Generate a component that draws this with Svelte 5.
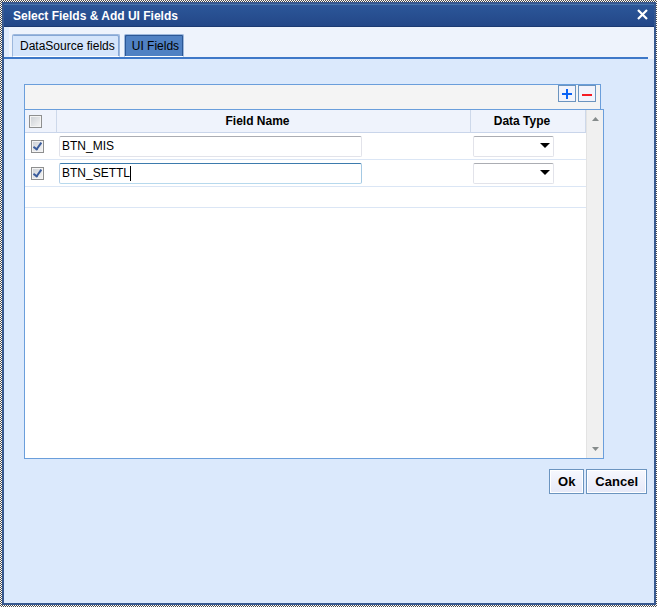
<script lang="ts">
	interface Field {
		id: number;
		name: string;
		type: string;
		checked: boolean;
	}

	const tabs = ['DataSource fields', 'UI Fields'];
	const types = ['', 'String', 'Number', 'Date'];

	let activeTab = $state(1);
	let editing = $state(2);
	let allChecked = $state(false);
	let nextId = 3;
	let fields = $state<Field[]>([
		{ id: 1, name: 'BTN_MIS', type: '', checked: true },
		{ id: 2, name: 'BTN_SETTL', type: '', checked: true }
	]);

	function addField() {
		fields.push({ id: nextId++, name: '', type: '', checked: false });
	}

	function removeFields() {
		fields = fields.filter((f) => !f.checked);
	}

	function toggleAll() {
		for (const f of fields) f.checked = allChecked;
	}
</script>

<div class="frame">
	<div class="dialog" role="dialog" aria-labelledby="dialog-title">
		<header class="title-bar">
			<h1 id="dialog-title">Select Fields &amp; Add UI Fields</h1>
			<button class="close" aria-label="Close">
				<svg width="11" height="11" viewBox="0 0 11 11">
					<path d="M1 1l9 9M10 1l-9 9" stroke="#fff" stroke-width="2.2" fill="none" />
				</svg>
			</button>
		</header>

		<div class="tab-strip">
			<div class="tabs" role="tablist">
				{#each tabs as tab, i}
					<button
						class="tab"
						class:active={activeTab === i}
						role="tab"
						aria-selected={activeTab === i}
						onclick={() => (activeTab = i)}>{tab}</button>
				{/each}
			</div>
		</div>

		<main>
			<div class="toolbar">
				<button class="tool" aria-label="Add field" onclick={addField}>
					<svg width="12" height="13" viewBox="0 0 12 13">
						<path d="M1 6h10v2H1zM5 2h2v10H5z" fill="#0a62f5" />
					</svg>
				</button>
				<button class="tool" aria-label="Remove field" onclick={removeFields}>
					<svg width="12" height="13" viewBox="0 0 12 13">
						<path d="M1 7h10v2H1z" fill="#f51b24" />
					</svg>
				</button>
			</div>

			<div class="grid">
				<div class="rows">
					<table>
						<thead>
							<tr>
								<th class="check">
									<input type="checkbox" aria-label="Select all" bind:checked={allChecked} onchange={toggleAll} />
								</th>
								<th>Field Name</th>
								<th class="type">Data Type</th>
							</tr>
						</thead>
						<tbody>
							{#each fields as field (field.id)}
								<tr>
									<td class="check">
										<input type="checkbox" aria-label="Select {field.name}" bind:checked={field.checked} />
									</td>
									<td>
										<div class="name" class:editing={editing === field.id}>
											<input
												type="text"
												aria-label="Field Name"
												bind:value={field.name}
												onfocus={() => (editing = 0)}
											/>
											{#if editing === field.id}
												<span class="caret"></span>
											{/if}
										</div>
									</td>
									<td class="type">
										<select aria-label="Data Type" bind:value={field.type}>
											{#each types as type}
												<option value={type}>{type}</option>
											{/each}
										</select>
										<svg class="arrow" width="10" height="5" viewBox="0 0 10 5">
											<path d="M0 0h10L5 5z" fill="#000" />
										</svg>
									</td>
								</tr>
							{/each}
							<tr class="blank"><td colspan="3"></td></tr>
						</tbody>
					</table>
				</div>
				<div class="scrollbar">
					<svg width="7" height="4" viewBox="0 0 7 4"><path d="M0 4L3.5 0 7 4z" fill="#858b8b" /></svg>
					<svg width="7" height="4" viewBox="0 0 7 4"><path d="M0 0h7L3.5 4z" fill="#858b8b" /></svg>
				</div>
			</div>
		</main>

		<footer>
			<button>Ok</button>
			<button>Cancel</button>
		</footer>
	</div>
</div>

<style>
	:global(body) {
		margin: 0;
		font-family: 'Liberation Sans', Arial, sans-serif;
		font-size: 12px;
		color: #000;
	}

	* {
		box-sizing: border-box;
	}

	button,
	input,
	select {
		margin: 0;
		font: inherit;
		color: inherit;
	}

	button {
		padding: 0;
		cursor: pointer;
	}

	svg {
		display: block;
	}

	.frame {
		display: flex;
		min-height: 100vh;
		padding: 2px 1px 2px 2px;
		background: repeating-conic-gradient(#4d4d4d 0 25%, #fff 0 50%) 0 0 / 2px 2px;
	}

	.dialog {
		flex: 1;
		border: 2px solid #38598f;
		background: #dbe9fc;
	}

	.title-bar {
		display: flex;
		align-items: center;
		justify-content: space-between;
		height: 23px;
		padding: 0 6px 2px 9px;
		border-top: 1px solid #4a78ae;
		border-bottom: 1px solid #1c3a72;
		background: linear-gradient(#2c5799, #234788);
		color: #fff;
	}

	h1 {
		margin: 0;
		padding-top: 2px;
		font-size: 12px;
		line-height: 14px;
	}

	.close {
		border: 0;
		background: none;
	}

	.tab-strip {
		padding-right: 6px;
		background: linear-gradient(90deg, #dfebfc 5px, #eef3fc 5px);
	}

	.tabs {
		display: flex;
		align-items: flex-end;
		gap: 4px;
		height: 32px;
		padding-left: 8px;
		border-bottom: 2px solid #3e78c8;
	}

	.tab {
		height: 23px;
		padding: 0 4px 0 7px;
		border: 1px solid #9db8dd;
		border-bottom: 1px solid #fff;
		border-radius: 2px 2px 0 0;
		background: #d5e5fb;
		box-shadow: inset -1px 1px #86a7d5;
		white-space: nowrap;
	}

	.tab.active {
		background: #5081c3;
		box-shadow: inset 1px 1px #2c5795, inset -1px 0 #2c5795;
	}

	main {
		margin: 25px 50px 0 20px;
	}

	.toolbar {
		display: flex;
		justify-content: flex-end;
		gap: 2px;
		height: 25px;
		margin-right: 3px;
		padding-right: 4px;
		border: 1px solid #6a9edb;
		border-bottom: 0;
		background: #f4f4f4;
	}

	.tool {
		display: flex;
		align-items: center;
		justify-content: center;
		width: 18px;
		height: 17px;
		border: 1px solid #6b94bf;
		background: #f1f3fc;
	}

	.grid {
		display: flex;
		height: 350px;
		border: 1px solid #6a9edb;
		background: #fff;
	}

	.rows {
		flex: 1;
		overflow: hidden;
	}

	table {
		width: 100%;
		border-collapse: separate;
		border-spacing: 0;
		table-layout: fixed;
	}

	th {
		height: 23px;
		padding: 0 12px 0 0;
		border-right: 1px solid #cdd8ea;
		border-bottom: 1px solid #c9d5ea;
		background: #eff3fc;
		text-align: center;
	}

	th.type {
		width: 115px;
	}

	th.check {
		width: 32px;
		padding: 0 0 0 4px;
	}

	td {
		position: relative;
		height: 27px;
		padding: 0 2px;
		border-bottom: 1px solid #dbe6f5;
	}

	td.check {
		padding: 0 0 0 6px;
	}

	.blank td {
		height: 21px;
	}

	input[type='checkbox'] {
		appearance: none;
		display: block;
		width: 13px;
		height: 13px;
		border: 1px solid #8e8f8f;
		background: linear-gradient(135deg, #cbcfd5, #f6f6f6);
		box-shadow: inset 0 0 0 1px #f4f4f4;
	}

	input[type='checkbox']:checked::after {
		content: '';
		display: block;
		box-sizing: border-box;
		width: 5px;
		height: 9px;
		margin-left: 3px;
		border: solid #3a5c9c;
		border-width: 0 2px 2px 0;
		transform: rotate(35deg);
	}

	.name {
		position: relative;
		width: 303px;
	}

	input[type='text'],
	select {
		display: block;
		width: 100%;
		height: 21px;
		padding: 0 2px;
		border: 1px solid #e2e3ea;
		border-top-color: #abadb3;
		border-radius: 2px;
		outline: 0;
		background: #fff;
	}

	.editing input[type='text'],
	input[type='text']:focus {
		border-color: #3d7bad #a4c9e3 #b7d9ed #b5cfe7;
	}

	.caret {
		position: absolute;
		top: 3px;
		left: 71px;
		width: 1px;
		height: 15px;
		background: #000;
	}

	select {
		appearance: none;
		width: 81px;
	}

	.arrow {
		position: absolute;
		top: 10px;
		left: 69px;
		pointer-events: none;
	}

	.scrollbar {
		display: flex;
		flex-direction: column;
		align-items: center;
		justify-content: space-between;
		width: 17px;
		padding: 7px 0;
		border-left: 1px solid #e3e3e3;
		background: #f0f0f0;
	}

	footer {
		display: flex;
		justify-content: flex-end;
		gap: 2px;
		padding: 10px 7px;
	}

	footer button {
		height: 25px;
		padding: 0 8px;
		border: 1px solid #6b94bf;
		background: linear-gradient(#f6f8fe, #e6e9f8);
		box-shadow: inset 0 0 0 1px #fff;
		font-size: 13px;
		font-weight: bold;
	}
</style>
